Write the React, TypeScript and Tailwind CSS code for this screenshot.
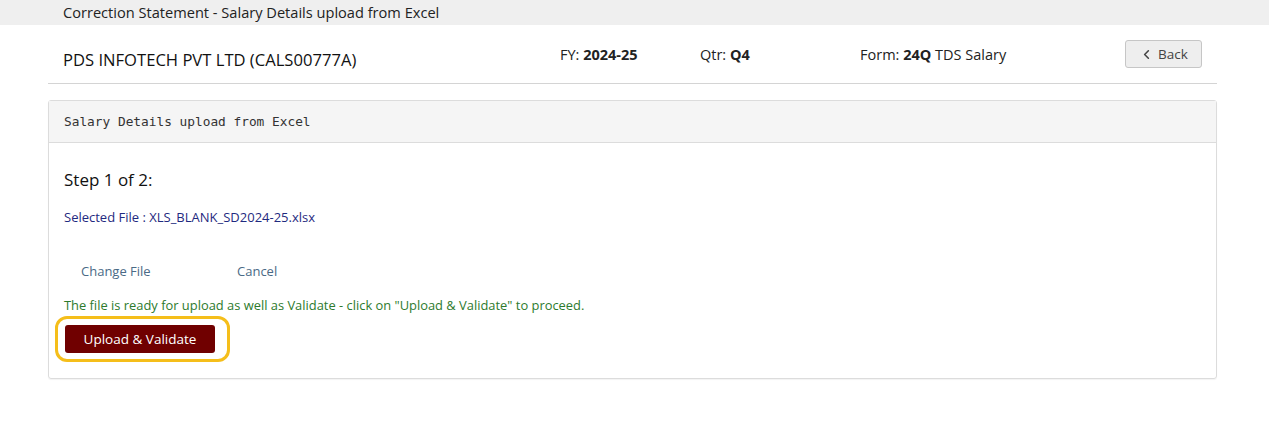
import { ChevronLeft } from "lucide-react";

export default function App() {
  return (
    <div className="w-[1269px] h-[447px] bg-white text-[#222] font-['Open_Sans',sans-serif]">
      {/* Page title strip */}
      <div className="h-[25px] bg-[#efefef] flex items-center pl-[63px] text-[14.6px] text-[#222]">
        Correction Statement - Salary Details upload from Excel
      </div>

      {/* Deductor header */}
      <div className="ml-[48px] mr-[52px] h-[59px] border-b border-[#d4d4d4] flex items-center">
        <div className="w-[512px] pl-[15px] pt-[12px] text-[16.6px] text-[#111]">
          PDS INFOTECH PVT LTD (CALS00777A)
        </div>
        <div className="w-[140px] text-[14.5px] pt-[2px]">
          FY: <span className="font-bold">2024-25</span>
        </div>
        <div className="w-[160px] text-[14.5px] pt-[2px]">
          Qtr: <span className="font-bold">Q4</span>
        </div>
        <div className="flex-1 text-[14.5px] pt-[2px]">
          Form: <span className="font-bold">24Q</span> TDS Salary
        </div>
        <button className="mr-[15px] w-[77px] h-[28px] flex items-center justify-center gap-[4px] bg-[#eeeeee] border border-[#c6c6c6] rounded-[3px] text-[13.5px] text-[#444]">
          <ChevronLeft className="w-[15px] h-[15px]" strokeWidth={2.5} />
          Back
        </button>
      </div>

      {/* Upload panel */}
      <div className="ml-[48px] mr-[52px] mt-[16px] border border-[#dcdcdc] rounded-[3px] shadow-[0_1px_1px_rgba(0,0,0,0.05)]">
        <div className="h-[42px] bg-[#f5f5f5] border-b border-[#dcdcdc] flex items-center pl-[15px] text-[12.8px] text-[#333] font-['DejaVu_Sans_Mono',monospace]">
          Salary Details upload from Excel
        </div>
        <div className="px-[15px] pt-[24px] pb-[16px]">
          <div className="text-[17px] text-[#111]">Step 1 of 2:</div>
          <div className="mt-[15px] text-[13px] text-[#1f2a80]">
            Selected File : XLS_BLANK_SD2024-25.xlsx
          </div>
          <div className="mt-[35px] flex text-[13px] text-[#4a6a86]">
            <span className="ml-[17px] w-[156px]">Change File</span>
            <span>Cancel</span>
          </div>
          <div className="mt-[14px] text-[12.9px] text-[#2d7a2d]">
            The file is ready for upload as well as Validate - click on "Upload &amp; Validate" to proceed.
          </div>
          <div className="mt-[1px] ml-[-9px] w-[175px] h-[46px] border-[3px] border-[#f5be1a] rounded-[12px] flex items-center pl-[7px]">
            <button className="w-[150px] h-[28px] bg-[#700000] rounded-[3px] text-white text-[13.5px]">
              Upload &amp; Validate
            </button>
          </div>
        </div>
      </div>
    </div>
  );
}
